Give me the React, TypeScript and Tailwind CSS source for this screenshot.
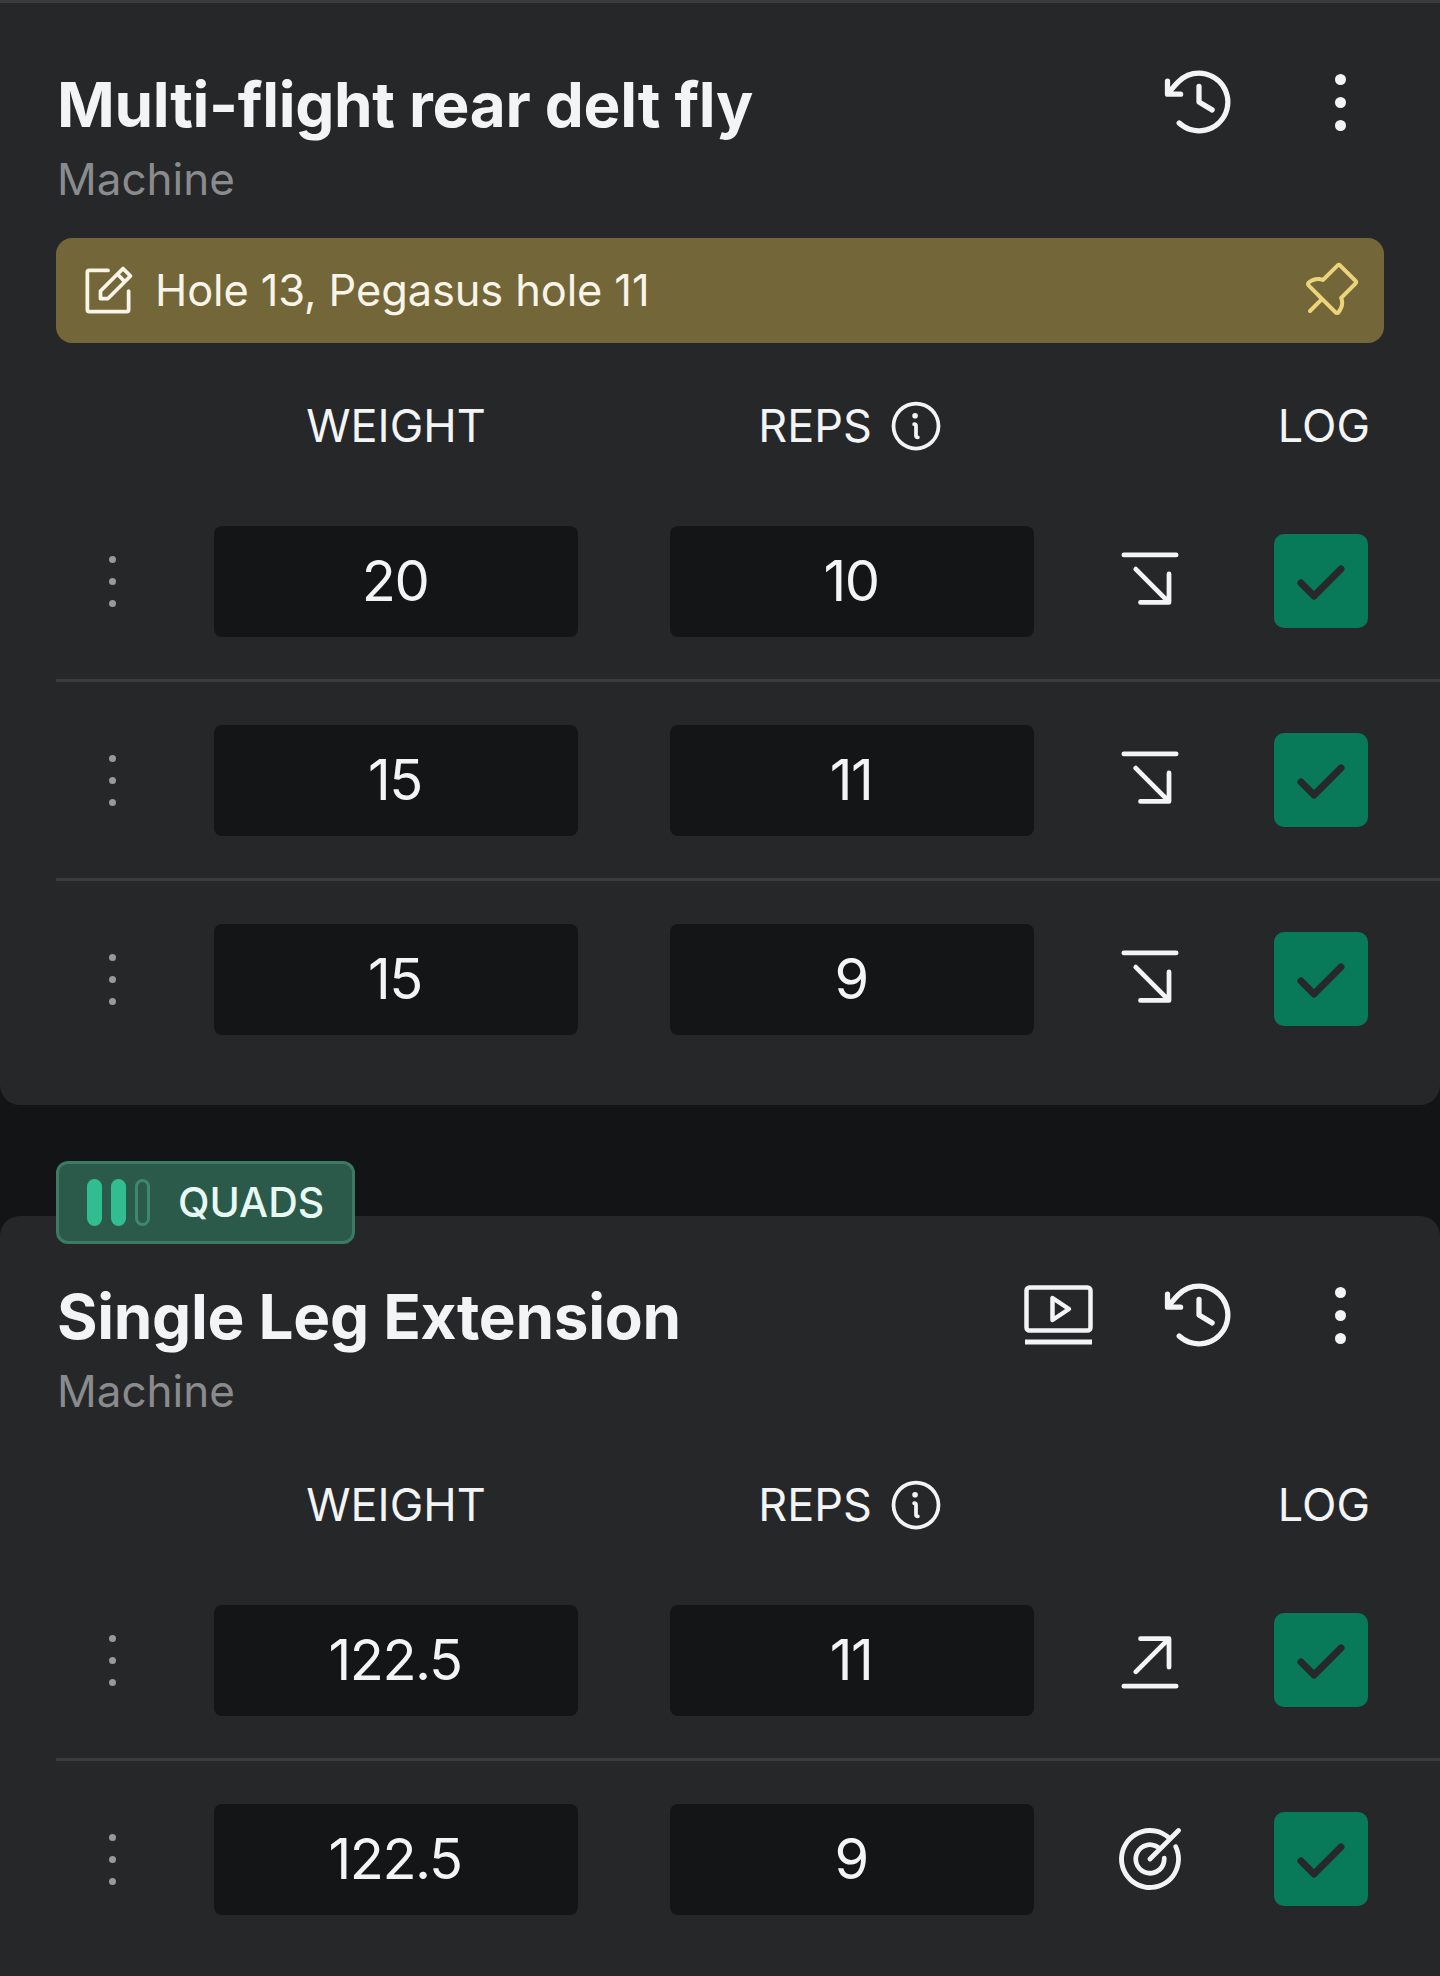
import React from "react";
import {
  PiClockCounterClockwise,
  PiNotePencil,
  PiPushPin,
  PiInfo,
  PiArrowLineDownRight,
  PiArrowLineUpRight,
  PiTarget,
} from "react-icons/pi";

const Dots = () => (
  <div className="flex flex-col items-center gap-[15px]">
    <span className="block h-[7px] w-[7px] rounded-full bg-[#98999b]" />
    <span className="block h-[7px] w-[7px] rounded-full bg-[#98999b]" />
    <span className="block h-[7px] w-[7px] rounded-full bg-[#98999b]" />
  </div>
);

const MenuDots = () => (
  <div className="flex h-[84px] w-[84px] flex-col items-center justify-center gap-[12px]">
    <span className="block h-[11px] w-[11px] rounded-full bg-[#f3f4f6]" />
    <span className="block h-[11px] w-[11px] rounded-full bg-[#f3f4f6]" />
    <span className="block h-[11px] w-[11px] rounded-full bg-[#f3f4f6]" />
  </div>
);

const Check = () => (
  <svg width="50" height="40" viewBox="0 0 50 40" fill="none">
    <path d="M5 20 L18 33 L45 6" stroke="#26282a" strokeWidth="7" strokeLinecap="round" strokeLinejoin="round" />
  </svg>
);

const MonitorPlay = () => (
  <svg width="84" height="84" viewBox="0 0 84 84" fill="none" stroke="#f3f4f6" strokeLinecap="round" strokeLinejoin="round">
    <rect x="10.5" y="14.5" width="64" height="43" rx="3" strokeWidth="4.5" />
    <path d="M9 69 H76" strokeWidth="5" strokeLinecap="butt" />
    <path d="M36.5 25 V47 L53 36 Z" strokeWidth="4.5" />
  </svg>
);

type Kind = "down" | "up" | "target";

const Row = ({ weight, reps, kind, last }: { weight: string; reps: string; kind: Kind; last?: boolean }) => (
  <div className={`ml-[56px] flex h-[199px] items-center border-b-[3px] ${last ? "border-transparent" : "border-[#3a3b3d]"}`}>
    <div className="flex w-[112px] justify-center">
      <Dots />
    </div>
    <div className="ml-[46px] flex h-[111px] w-[364px] items-center justify-center rounded-[8px] bg-[#131517] pr-[2px] text-[56px] tracking-[-1.5px] text-[#f3f4f6]">
      {weight}
    </div>
    <div className="ml-[92px] flex h-[111px] w-[364px] items-center justify-center rounded-[8px] bg-[#131517] pr-[2px] text-[56px] tracking-[-1.5px] text-[#f3f4f6]">
      {reps}
    </div>
    <div className="ml-[74px] flex h-[84px] w-[84px] items-center justify-center text-[#f3f4f6]">
      {kind === "down" && <PiArrowLineDownRight size={76} />}
      {kind === "up" && <PiArrowLineUpRight size={76} />}
      {kind === "target" && <PiTarget size={76} />}
    </div>
    <div className="ml-[82px] flex h-[94px] w-[94px] items-center justify-center rounded-[10px] bg-[#087a59] pt-[3px]">
      <Check />
    </div>
  </div>
);

const Header = () => (
  <div className="ml-[214px] flex h-[50px] items-center text-[45px] font-normal leading-[50px] text-[#f3f4f6]">
    <div className="w-[364px] shrink-0 text-center">WEIGHT</div>
    <div className="ml-[92px] flex w-[364px] shrink-0 items-center justify-center gap-[14px] pr-[6px]">
      <span>REPS</span>
      <PiInfo size={60} className="-mr-[6px]" />
    </div>
    <div className="flex-1 pr-[70px] text-right">LOG</div>
  </div>
);

const Title = ({ name }: { name: string }) => (
  <div>
    <div className="-mt-[1px] text-[62px] font-bold leading-[72px] tracking-[-0.3px] text-[#f3f4f6]">{name}</div>
    <div className="mt-[13px] text-[44px] leading-[50px] text-[#8a8b8d]">Machine</div>
  </div>
);

export default function App() {
  return (
    <div className="h-[1976px] w-[1440px] overflow-hidden bg-[#121416] font-['Inter',sans-serif]">
      <section className="h-[1105px] rounded-b-[20px] border-t-[3px] border-[#3a3b3d] bg-[#262729] pt-[67px]">
        <div className="flex items-start justify-between pl-[57px] pr-[58px]">
          <Title name="Multi-flight rear delt fly" />
          <div className="-mt-[10px] flex items-center gap-[57px]">
            <PiClockCounterClockwise size={84} className="text-[#f3f4f6]" />
            <MenuDots />
          </div>
        </div>
        <div className="ml-[56px] mr-[56px] mt-[34px] flex h-[105px] items-center rounded-[16px] bg-[#736638] pl-[22px] pr-[22px] text-[43.4px] tracking-[-0.1px] text-[#f8f4e8]">
          <PiNotePencil size={60} />
          <span className="ml-[17px] flex-1">Hole 13, Pegasus hole 11</span>
          <PiPushPin size={64} className="text-[#ecd47a]" />
        </div>
        <div className="mb-[32px] mt-[58px]">
          <Header />
        </div>
        <Row weight="20" reps="10" kind="down" />
        <Row weight="15" reps="11" kind="down" />
        <Row weight="15" reps="9" kind="down" last />
      </section>

      <section className="relative mt-[111px] h-[760px] rounded-t-[20px] bg-[#262729] pt-[66px]">
        <div className="absolute left-[56px] top-[-55px] flex h-[83px] w-[299px] items-center rounded-[12px] border-[3px] border-[#3b7a63] bg-[#2c5a4a] pl-[28px]">
          <span className="h-[47px] w-[15px] rounded-full bg-[#31bd8f]" />
          <span className="ml-[9px] h-[47px] w-[15px] rounded-full bg-[#31bd8f]" />
          <span className="ml-[9px] h-[47px] w-[15px] rounded-full border-[3px] border-[#3b8a6e]" />
          <span className="ml-[28px] text-[41px] font-medium leading-none text-[#e8f8f3]">QUADS</span>
        </div>
        <div className="flex items-start justify-between pl-[57px] pr-[58px]">
          <Title name="Single Leg Extension" />
          <div className="-mt-[9px] flex items-center">
            <MonitorPlay />
            <PiClockCounterClockwise size={84} className="ml-[57px] text-[#f3f4f6]" />
            <div className="ml-[57px]">
              <MenuDots />
            </div>
          </div>
        </div>
        <div className="mb-[32px] mt-[64px]">
          <Header />
        </div>
        <Row weight="122.5" reps="11" kind="up" />
        <Row weight="122.5" reps="9" kind="target" last />
      </section>
    </div>
  );
}
